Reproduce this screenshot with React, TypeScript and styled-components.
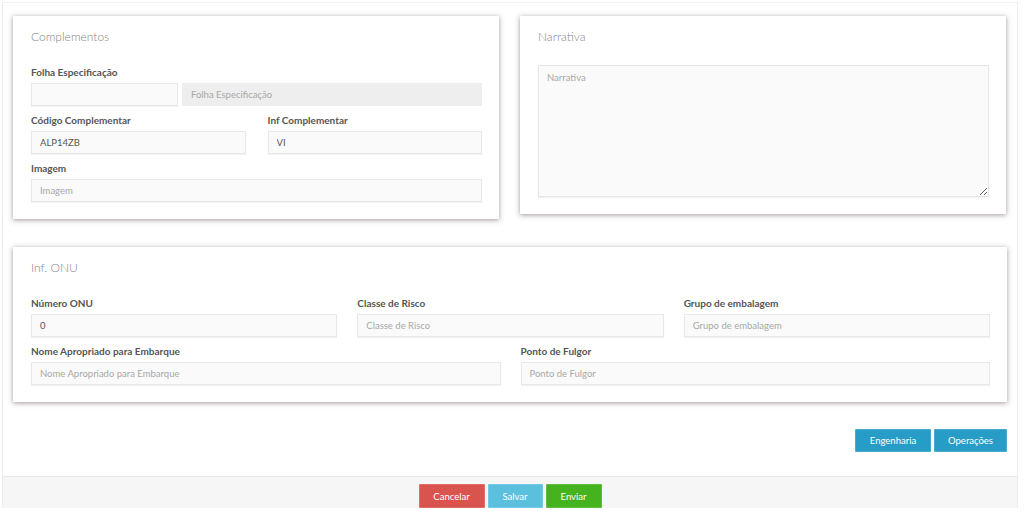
import React from "react";
import styled, { createGlobalStyle } from "styled-components";

const GlobalStyle = createGlobalStyle`
  html, body {
    margin: 0;
    padding: 0;
    background: #fff;
  }
  body {
    font-family: Lato, "Open Sans", Arial, sans-serif;
    color: #555;
  }
`;

const Page = styled.div`
  margin: 2px 6px 0 2px;
  border-left: 1px solid #ececec;
  border-right: 1px solid #ececec;
  border-top: 1px solid #f3f3f3;
`;

const Content = styled.div`
  padding: 13px 10px 0 10px;
`;

const TopRow = styled.div`
  display: grid;
  grid-template-columns: 486px 486px;
  column-gap: 21px;
  align-items: start;
`;

const Card = styled.section<{ $mt?: number }>`
  background: #fff;
  margin-top: ${(p) => p.$mt ?? 0}px;
  padding: 12px 17px 17px 18px;
  box-shadow: 0 1px 5px rgba(70, 50, 50, 0.5);
`;

const CardTitle = styled.h3`
  margin: 0 0 19px 0;
  font-size: 12px;
  line-height: 18px;
  font-weight: 300;
  color: #858585;
`;

const Grid = styled.div<{ $cols: number; $gap: number }>`
  display: grid;
  grid-template-columns: repeat(${(p) => p.$cols}, 1fr);
  column-gap: ${(p) => p.$gap}px;
  row-gap: 7px;
`;

const Field = styled.div<{ $span?: number }>`
  grid-column: span ${(p) => p.$span ?? 1};
  display: flex;
  flex-direction: column;
`;

const Label = styled.label`
  font-size: 10px;
  line-height: 14px;
  font-weight: 700;
  color: #555;
  margin-bottom: 4px;
`;

const Input = styled.input<{ $readOnlyLook?: boolean }>`
  box-sizing: border-box;
  height: 23px;
  width: 100%;
  padding: 0 8px;
  font-family: Lato, "Open Sans", Arial, sans-serif;
  font-size: 9.5px;
  color: #555;
  background: ${(p) => (p.$readOnlyLook ? "#eeeeee" : "#fafafa")};
  border: 1px solid ${(p) => (p.$readOnlyLook ? "#eeeeee" : "#e8e8e8")};
  box-shadow: ${(p) => (p.$readOnlyLook ? "none" : "0 1px 1px rgba(0,0,0,0.05)")};
  border-radius: 0;
  outline: none;
  &::placeholder {
    color: #a8a8a8;
  }
`;

const SplitInputs = styled.div`
  display: grid;
  grid-template-columns: 147px 1fr;
  column-gap: 4px;
`;

const TextArea = styled.textarea`
  box-sizing: border-box;
  display: block;
  width: 100%;
  height: 132px;
  padding: 6px 8px;
  font-family: Lato, "Open Sans", Arial, sans-serif;
  font-size: 9.5px;
  color: #555;
  background: #fafafa;
  border: 1px solid #e6e6e6;
  box-shadow: 0 1px 1px rgba(0, 0, 0, 0.05);
  border-radius: 0;
  outline: none;
  &::placeholder {
    color: #a8a8a8;
  }
`;

const ActionRow = styled.div`
  display: flex;
  justify-content: flex-end;
  gap: 3px;
  margin: 27px 0 24px 0;
`;

const Button = styled.button<{ $bg: string; $w: number; $h?: number }>`
  width: ${(p) => p.$w}px;
  height: ${(p) => p.$h ?? 23}px;
  padding: 0;
  border: 1px solid rgba(255, 255, 255, 0.15);
  border-radius: 1px;
  background: ${(p) => p.$bg};
  color: #fff;
  font-family: Lato, "Open Sans", Arial, sans-serif;
  font-size: 9.5px;
  cursor: pointer;
`;

const Footer = styled.footer`
  border-top: 1px solid #e9e9e9;
  background: #f6f6f6;
  height: 32px;
  display: flex;
  justify-content: center;
  align-items: flex-start;
  gap: 3px;
  padding-top: 7px;
  box-sizing: border-box;
`;

export default function App() {
  return (
    <>
      <GlobalStyle />
      <Page>
        <Content>
          <TopRow>
            <Card>
              <CardTitle>Complementos</CardTitle>
              <Grid $cols={2} $gap={22}>
                <Field $span={2}>
                  <Label>Folha Especificação</Label>
                  <SplitInputs>
                    <Input />
                    <Input $readOnlyLook readOnly placeholder="Folha Especificação" />
                  </SplitInputs>
                </Field>
                <Field>
                  <Label>Código Complementar</Label>
                  <Input defaultValue="ALP14ZB" />
                </Field>
                <Field>
                  <Label>Inf Complementar</Label>
                  <Input defaultValue="VI" />
                </Field>
                <Field $span={2}>
                  <Label>Imagem</Label>
                  <Input placeholder="Imagem" />
                </Field>
              </Grid>
            </Card>
            <Card>
              <CardTitle>Narrativa</CardTitle>
              <TextArea placeholder="Narrativa" />
            </Card>
          </TopRow>

          <Card $mt={28}>
            <CardTitle>Inf. ONU</CardTitle>
            <Grid $cols={6} $gap={20}>
              <Field $span={2}>
                <Label>Número ONU</Label>
                <Input defaultValue="0" />
              </Field>
              <Field $span={2}>
                <Label>Classe de Risco</Label>
                <Input placeholder="Classe de Risco" />
              </Field>
              <Field $span={2}>
                <Label>Grupo de embalagem</Label>
                <Input placeholder="Grupo de embalagem" />
              </Field>
              <Field $span={3}>
                <Label>Nome Apropriado para Embarque</Label>
                <Input placeholder="Nome Apropriado para Embarque" />
              </Field>
              <Field $span={3}>
                <Label>Ponto de Fulgor</Label>
                <Input placeholder="Ponto de Fulgor" />
              </Field>
            </Grid>
          </Card>

          <ActionRow>
            <Button $bg="#279cc6" $w={76}>Engenharia</Button>
            <Button $bg="#279cc6" $w={73}>Operações</Button>
          </ActionRow>
        </Content>
        <Footer>
          <Button $bg="#d9534f" $w={66} $h={24}>Cancelar</Button>
          <Button $bg="#5bc0de" $w={55} $h={24}>Salvar</Button>
          <Button $bg="#45b31e" $w={56} $h={24}>Enviar</Button>
        </Footer>
      </Page>
    </>
  );
}
